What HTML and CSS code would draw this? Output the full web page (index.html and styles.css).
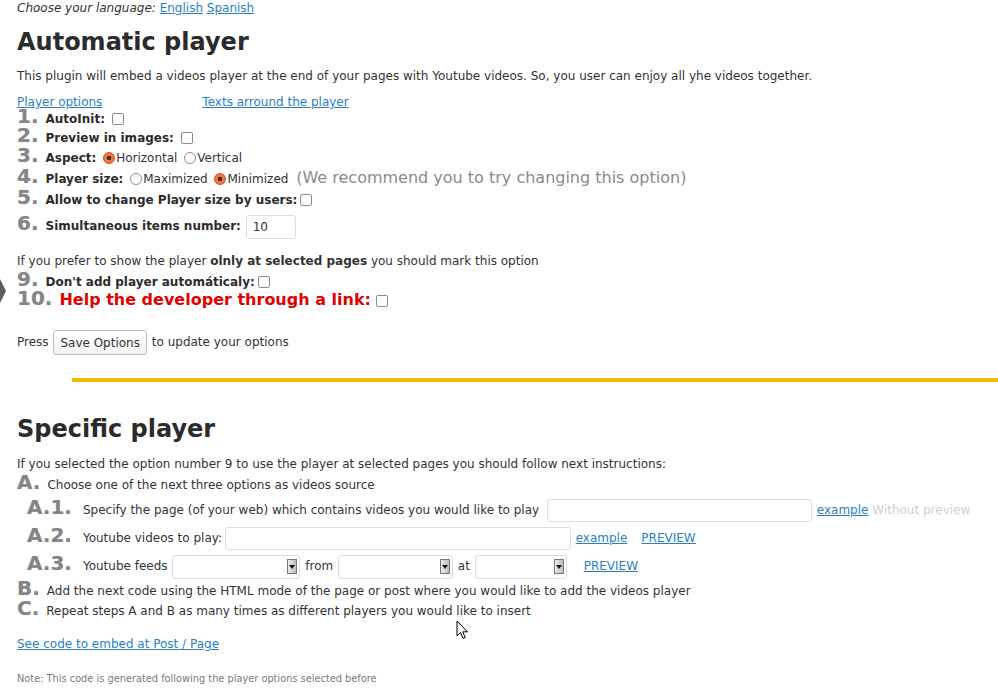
FILE: index.html
```html
<!DOCTYPE html>
<html lang="en">
<head>
<meta charset="utf-8">
<title>Automatic player</title>
<link rel="stylesheet" href="styles.css">
</head>
<body>
<div class="wrap">
  <p class="lang"><em>Choose your language:</em> <a href="#">English</a> <a href="#">Spanish</a></p>

  <h2 class="title">Automatic player</h2>
  <p class="desc">This plugin will embed a videos player at the end of your pages with Youtube videos. So, you user can enjoy all yhe videos together.</p>

  <div class="tabs"><a href="#">Player options</a><a href="#" class="tab2">Texts arround the player</a></div>

  <div class="opt opt-1"><span class="num">1. </span><b>AutoInit:</b> <input type="checkbox" class="cb"></div>
  <div class="opt"><span class="num">2. </span><b>Preview in images:</b> <input type="checkbox" class="cb"></div>
  <div class="opt opt-radio"><span class="num">3. </span><b>Aspect:</b> <input type="radio" name="asp" class="rd" checked>Horizontal <input type="radio" name="asp" class="rd">Vertical</div>
  <div class="opt opt-tall"><span class="num">4. </span><b>Player size:</b> <input type="radio" name="sz" class="rd">Maximized <input type="radio" name="sz" class="rd" checked>Minimized <span class="hint">(We recommend you to try changing this option)</span></div>
  <div class="opt"><span class="num">5. </span><b>Allow to change Player size by users:</b><input type="checkbox" class="cb"></div>
  <div class="opt opt-input"><span class="num">6. </span><b>Simultaneous items number:</b> <input type="text" class="txt num-in" value="10"></div>

  <p class="pref">If you prefer to show the player <b>olnly at selected pages</b> you should mark this option</p>
  <div class="opt opt-9"><span class="num">9. </span><b>Don't add player automáticaly:</b><input type="checkbox" class="cb"></div>
  <div class="opt opt-10"><span class="num">10. </span><b class="help">Help the developer through a link:</b> <input type="checkbox" class="cb cb-tight"></div>

  <div class="press">Press <button type="button" class="btn">Save Options</button> to update your options</div>

  <div class="rule"></div>

  <h2 class="title title2">Specific player</h2>
  <p class="instr">If you selected the option number 9 to use the player at selected pages you should follow next instructions:</p>

  <div class="opt step stepa"><span class="num">A. </span>Choose one of the next three options as videos source</div>
  <div class="sub sub1"><span class="num">A.1. </span>Specify the page (of your web) which contains videos you would like to play <input type="text" class="txt in-a1"> <a href="#">example</a> <span class="muted">Without preview</span></div>
  <div class="sub"><span class="num">A.2. </span>Youtube videos to play: <input type="text" class="txt in-a2"> <a href="#">example</a><a href="#" class="prev">PREVIEW</a></div>
  <div class="sub"><span class="num">A.3. </span>Youtube feeds <span class="sel sel1"><span class="sel-btn"></span></span> from <span class="sel sel2"><span class="sel-btn"></span></span> at <span class="sel sel3"><span class="sel-btn"></span></span><a href="#" class="prev prev3">PREVIEW</a></div>
  <div class="opt step stepb"><span class="num">B. </span>Add the next code using the HTML mode of the page or post where you would like to add the videos player</div>
  <div class="opt step"><span class="num">C. </span>Repeat steps A and B as many times as different players you would like to insert</div>

  <p class="embed"><a href="#">See code to embed at Post / Page</a></p>
  <p class="note">Note: This code is generated following the player options selected before</p>
</div>

<svg class="chev" width="6" height="24" viewBox="0 0 6 24"><polygon points="0,0 6,12 0,24" fill="#5f5f5f"/></svg>
<svg class="cursor" width="13" height="20" viewBox="0 0 13 20"><path d="M1 1 L1 16 L4.5 12.5 L7 18.5 L9.2 17.6 L6.8 11.8 L11.5 11.8 Z" fill="#fff" stroke="#000" stroke-width="1" stroke-linejoin="round"/></svg>
</body>
</html>
```

FILE: styles.css
```css
html, body {
  margin: 0;
  padding: 0;
  background: #fff;
}
body {
  font-family: "DejaVu Sans", "Liberation Sans", sans-serif;
  font-size: 12px;
  color: #333;
  position: relative;
  min-height: 692px;
  overflow: hidden;
}
a { color: #2a7fbf; }
p { margin: 0; }

.wrap {
  padding-left: 17px;
}

.lang {
  line-height: 16px;
  color: #333;
}

.title {
  margin: 12px 0 0;
  font-size: 24px;
  line-height: 28px;
  font-weight: bold;
  color: #2b2b2b;
}
.desc {
  margin-top: 11px;
  line-height: 18px;
}
.tabs {
  margin-top: 8px;
  line-height: 18px;
  display: flex;
}
.tab2 { margin-left: 100px; }

.opt {
  height: 19px;
  line-height: 19px;
  white-space: nowrap;
}
.opt-1 { margin-top: -1px; }
.opt-radio { height: 20px; line-height: 20px; }
.opt-tall { height: 23px; line-height: 23px; }
.opt-input { height: 32px; line-height: 32px; }
.opt-9 { height: 18px; line-height: 18px; margin-top: 3px; }
.opt-10 { height: 20px; line-height: 20px; }

.num {
  font-size: 20px;
  font-weight: bold;
  color: #858585;
  text-shadow: 0 0 1px #c8c8c8;
  line-height: 10px;
  white-space: pre;
}
.opt b { color: #2b2b2b; }
.help {
  font-size: 16px;
  line-height: 10px;
  color: #e00000 !important;
}
.hint {
  font-size: 16px;
  line-height: 10px;
  color: #8a8a8a;
  margin-left: 4px;
}

.cb {
  appearance: none;
  -webkit-appearance: none;
  width: 12px;
  height: 12px;
  margin: 0 0 0 3px;
  border: 1px solid #8c8c8c;
  border-radius: 2px;
  background: #fff;
  vertical-align: middle;
  position: relative;
  top: -1px;
}
.cb-tight { margin-left: 1px; }
.rd {
  appearance: none;
  -webkit-appearance: none;
  width: 12px;
  height: 12px;
  margin: 0 1px 0 3px;
  border: 1px solid #8c8c8c;
  border-radius: 50%;
  background: #fff;
  vertical-align: middle;
  position: relative;
  top: -1px;
}
.rd:checked {
  border-color: #c4521f;
  background: radial-gradient(circle, #4d2c1c 0, #4d2c1c 2px, #f0793f 2.6px);
}

.txt {
  font-family: inherit;
  font-size: 12px;
  color: #333;
  height: 23px;
  box-sizing: border-box;
  border: 1px solid #dcdcdc;
  border-radius: 3px;
  background: #fff;
  padding: 0 6px;
  margin: 0 1px;
  outline: none;
  vertical-align: middle;
}
.num-in { width: 50px; height: 24px; }
.in-a1 { width: 265px; margin-left: 4px; }
.in-a2 { width: 346px; margin-left: -1px; }

.pref {
  margin-top: 10px;
  line-height: 18px;
}

.press {
  margin-top: 19px;
  height: 25px;
  line-height: 25px;
  white-space: nowrap;
}
.btn {
  font-family: inherit;
  font-size: 12px;
  color: #333;
  height: 25px;
  padding: 0 6px;
  border: 1px solid #bdbdbd;
  border-radius: 3px;
  background: linear-gradient(#fefefe, #f3f3f3);
  margin: 0 1px;
  vertical-align: middle;
}

.rule {
  margin: 23px 0 0 55px;
  height: 4px;
  background: #f6b500;
}

.title2 { margin-top: 33px; }
.instr {
  margin-top: 12px;
  line-height: 18px;
}
.step { height: 20px; line-height: 20px; }
.stepa { margin-top: 2px; }
.stepb { margin-top: 1px; }

.sub {
  height: 28px;
  line-height: 28px;
  padding-left: 10px;
  white-space: nowrap;
}
.sub1 { margin-top: 1px; }
.sub .num { margin-right: 4px; }
.muted { color: #cfcfcf; }
.prev { margin-left: 14px; }
.prev3 { margin-left: 16px; }

.sel {
  display: inline-flex;
  justify-content: flex-end;
  align-items: center;
  box-sizing: border-box;
  height: 24px;
  border: 1px solid #dcdcdc;
  border-radius: 3px;
  background: #fff;
  padding-right: 2px;
  margin: 0 1px;
  vertical-align: middle;
}
.sel1 { width: 128px; }
.sel2 { width: 115px; }
.sel3 { width: 92px; }
.sel-btn {
  width: 10px;
  height: 15px;
  box-sizing: border-box;
  border: 1px solid #777;
  background: linear-gradient(90deg, #eee, #bcbcbc);
  display: flex;
  align-items: center;
  justify-content: center;
}
.sel-btn::before {
  content: "";
  border-left: 3px solid transparent;
  border-right: 3px solid transparent;
  border-top: 4px solid #111;
}

.embed {
  margin-top: 14px;
  line-height: 18px;
}
.note {
  margin-top: 19px;
  font-size: 9.8px;
  line-height: 14px;
  color: #7a7a7a;
}

.chev {
  position: absolute;
  left: 0;
  top: 279px;
}
.cursor {
  position: absolute;
  left: 456px;
  top: 620px;
}
```
